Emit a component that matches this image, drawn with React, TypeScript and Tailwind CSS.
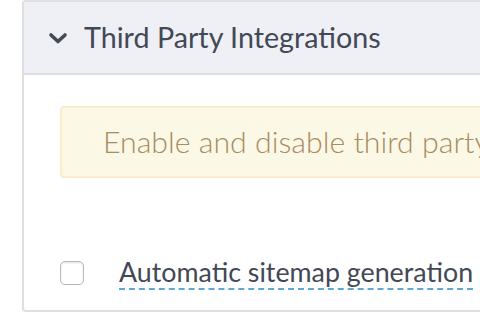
const Chevron = () => (
  <svg width="20" height="14" viewBox="0 0 20 14" className="shrink-0">
    <path d="M3 4 L10 10.5 L17 4" fill="none" stroke="#454a56" strokeWidth="3.6" strokeLinecap="round" strokeLinejoin="round" />
  </svg>
);

const App = () => {
  return (
    <div className="h-[332px] w-[480px] overflow-hidden bg-white pl-[22px] font-['Lato',sans-serif]">
      <div className="h-[312px] w-[520px] rounded-[4px] border-2 border-[#dfdfdf]">
        <div className="flex h-[73px] items-center gap-[16px] border-b-2 border-[#dfdfdf] bg-[#eff0f5] pl-[24px]">
          <Chevron />
          <h2 className="pb-[1px] text-[28.7px] leading-none text-[#434856]">Third Party Integrations</h2>
        </div>

        <div className="px-[36px] pt-[31px]">
          <div className="flex h-[72px] items-center overflow-hidden rounded-[4px] border-2 border-[#faeccc] bg-[#fcf8e6] pl-[41px]">
            <p className="whitespace-nowrap text-[30.3px] font-light text-[#a88b60]">
              Enable and disable third party integrations
            </p>
          </div>

          <div className="mt-[78px] flex items-center gap-[35px]">
            <span className="h-[24px] w-[24px] shrink-0 rounded-[5px] border border-[#b8b8b8] bg-white shadow-[inset_0_1px_2px_rgba(0,0,0,0.12)]" />
            <span className="whitespace-nowrap border-b-2 border-dashed border-[#5fa8d3] text-[26.8px] leading-[32px] text-[#434856]">
              Automatic sitemap generation
            </span>
          </div>
        </div>
      </div>
    </div>
  );
};

export default App;
